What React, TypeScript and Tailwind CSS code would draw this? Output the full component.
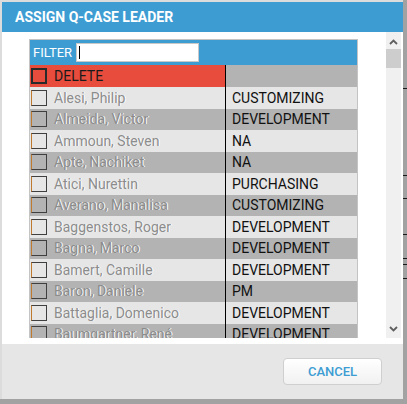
import React from 'react';

interface Member {
  name: string;
  dept: string;
}

const members: Member[] = [
  { name: 'Alesi, Philip', dept: 'CUSTOMIZING' },
  { name: 'Almeida, Victor', dept: 'DEVELOPMENT' },
  { name: 'Ammoun, Steven', dept: 'NA' },
  { name: 'Apte, Nachiket', dept: 'NA' },
  { name: 'Atici, Nurettin', dept: 'PURCHASING' },
  { name: 'Averano, Manalisa', dept: 'CUSTOMIZING' },
  { name: 'Baggenstos, Roger', dept: 'DEVELOPMENT' },
  { name: 'Bagna, Marco', dept: 'DEVELOPMENT' },
  { name: 'Bamert, Camille', dept: 'DEVELOPMENT' },
  { name: 'Baron, Daniele', dept: 'PM' },
  { name: 'Battaglia, Domenico', dept: 'DEVELOPMENT' },
  { name: 'Baumgartner, René', dept: 'DEVELOPMENT' },
];

// background page lines peeking out on the right edge
const ticks = [88, 175, 198, 234, 258, 264, 278];

const Chevron: React.FC<{ up?: boolean }> = ({ up }) => (
  <svg width="9" height="6" viewBox="0 0 9 6" className="block">
    <path
      d={up ? 'M1 5 L4.5 1.5 L8 5' : 'M1 1 L4.5 4.5 L8 1'}
      fill="none"
      stroke="#5f5f5f"
      strokeWidth={1.8}
    />
  </svg>
);

const App: React.FC = () => {
  return (
    <div className="relative w-[407px] h-[404px] overflow-hidden bg-[#a2a2a2] font-['Roboto','Liberation_Sans',sans-serif]">
      {ticks.map((y) => (
        <div key={y} className="absolute right-0 w-[4px] h-[1px] bg-[#1a1a1a]" style={{ top: y }} />
      ))}

      <div className="w-[403px] h-[399px] border-t-2 border-l-2 border-[#dcdcdc] flex flex-col">
        {/* Header */}
        <div className="h-[30px] bg-[#3d9dd3] flex items-center pl-[13px]">
          <h2 className="text-white font-bold text-[14px] leading-none">ASSIGN Q-CASE LEADER</h2>
        </div>

        {/* Body */}
        <div className="h-[312px] bg-white flex flex-col">
          <div className="h-[306px] flex">
            <div className="w-[384px] h-full overflow-hidden pl-[27px] pt-[7px]">
              <div className="w-[329px] border-t border-x border-[#c4c4c4]">
                {/* Filter row */}
                <div className="h-[25px] bg-[#3d9dd3] flex items-center pl-[3px]">
                  <span className="text-white text-[13px] leading-none">FILTER</span>
                  <div className="ml-[4px] w-[123px] h-[19px] bg-white border border-[#c8c8c8] flex items-center pl-[2px]">
                    <div className="w-[1px] h-[13px] bg-black" />
                  </div>
                </div>

                {/* Delete row */}
                <div className="h-[22px] flex">
                  <div className="w-[195px] bg-[#e84c3d] flex items-center">
                    <div className="ml-[1px] w-[16px] h-[16px] border-2 border-[#2a2a2a]" />
                    <span className="ml-[7px] text-[14px] text-[#1a1a1a] leading-none">DELETE</span>
                  </div>
                  <div className="flex-1 bg-[#b3b3b3] border-l border-black" />
                </div>

                {members.map((m, i) => (
                  <div
                    key={m.name}
                    className={`h-[21.5px] flex ${i % 2 === 0 ? 'bg-[#e6e6e6]' : 'bg-[#b3b3b3]'}`}
                  >
                    <div className="w-[195px] flex items-center">
                      <div className="ml-[1px] w-[16px] h-[16px] border-[1.5px] border-[#3f3f3f] border-l-[#c07a30]" />
                      <span className="ml-[7px] text-[14px] leading-none text-[#8c8c8c] [text-shadow:1px_0_0_#ffffff]">
                        {m.name}
                      </span>
                    </div>
                    <div className="flex-1 border-l border-black flex items-center pl-[6px]">
                      <span className="text-[14px] leading-none text-[#111]">{m.dept}</span>
                    </div>
                  </div>
                ))}
              </div>
            </div>

            {/* Scrollbar */}
            <div className="w-[15px] h-full bg-[#f0f0f0] flex flex-col items-center">
              <div className="h-[17px] flex items-center justify-center pt-[2px]">
                <Chevron up />
              </div>
              <div className="w-full h-[19px] bg-[#cdcdcd]" />
              <div className="flex-1" />
              <div className="h-[12px] flex items-start justify-center">
                <Chevron />
              </div>
            </div>
          </div>
        </div>

        {/* Footer */}
        <div className="flex-1 bg-[#e6e6e6] flex items-center justify-end pr-[21px]">
          <button className="w-[99px] h-[27px] rounded-[4px] border border-[#cfcfcf] bg-gradient-to-b from-white to-[#f1f1f1] text-[#3d9dd3] text-[13px] font-medium leading-none">
            CANCEL
          </button>
        </div>
      </div>
    </div>
  );
};

export default App;
